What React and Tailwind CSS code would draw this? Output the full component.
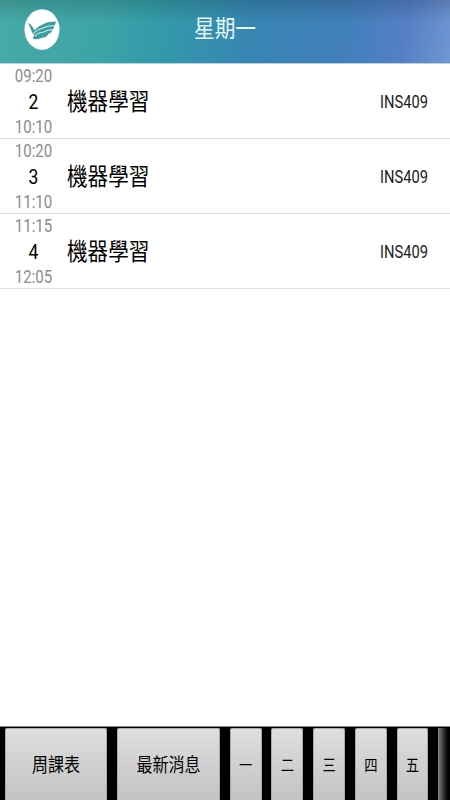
const lessons = [
  { period: 2, start: "09:20", end: "10:10", name: "機器學習", room: "INS409" },
  { period: 3, start: "10:20", end: "11:10", name: "機器學習", room: "INS409" },
  { period: 4, start: "11:15", end: "12:05", name: "機器學習", room: "INS409" },
];

const days = ["一", "二", "三", "四", "五"];

function Logo() {
  return (
    <svg className="h-[41px] w-[36px]" viewBox="0 0 36 41" fill="none">
      <ellipse cx="18" cy="20.5" rx="17.5" ry="20.2" fill="#fff" />
      <path
        d="M3.8 14.3C7 14.6 8.6 18.2 10.6 21.2C13 18 16.5 16.8 19.5 15C23 12.8 27 12.8 31.8 12.6C31.8 15 31 16.2 30 16.8C30.5 18.5 29.5 20 28.2 20.8C28 23.3 26.5 24.5 24.6 24.6C23.5 28 20.3 28.8 17.3 28.9C14.5 30.3 10.5 30.8 8.8 29.2C8.6 28 9.8 27.4 10.6 26.4C6.6 23 7 18 3.8 14.3Z"
        fill="#3b9da0"
      />
      <path
        d="M10 24.8C12.5 19.8 17 20.4 21 18.2C24 16.7 27 17.1 30 16.6M11 27.4C14 22.6 18 24.3 22 22C24.5 20.7 26 21.1 28.4 20.8"
        stroke="#fff"
        strokeWidth="0.9"
      />
    </svg>
  );
}

function Header() {
  return (
    <header className="h-16 border-b border-[#b1d5e3] bg-linear-[100deg,#47aaa7_0%,#3da4a7_23%,#339ba9_35%,#3884b3_57%,#417fbb_76%,#557fc5_89%,#7096d2_100%]">
      <div className="grid h-full grid-cols-[1fr_auto_1fr] items-start bg-linear-to-b from-black/15 via-transparent via-35% to-transparent">
        <div className="pt-[9px] pl-6">
          <Logo />
        </div>
        <h1 className="mt-[13px] origin-center scale-y-[1.15] text-[20.7px] leading-8 text-[#e5f8fa]">
          星期一
        </h1>
      </div>
    </header>
  );
}

function LessonRow({ lesson }) {
  return (
    <li className="flex h-[75px] items-center border-b border-[#dedede] pt-[3px] pr-[22px]">
      <div className="flex w-[67px] flex-col items-center text-[15px] leading-[25.5px] text-[#8c8c8c]">
        <span className="scale-y-[1.18]">{lesson.start}</span>
        <span className="scale-y-[1.18] text-[17.5px] text-black">{lesson.period}</span>
        <span className="scale-y-[1.18]">{lesson.end}</span>
      </div>
      <span className="mb-[2px] flex-1 scale-y-[1.18] text-[20.6px] leading-8 text-black">{lesson.name}</span>
      <span className="scale-y-[1.2] text-[14.7px] text-[#222]">{lesson.room}</span>
    </li>
  );
}

function BarButton({ className, children }) {
  return (
    <button
      className={`flex h-full shrink-0 items-center justify-center rounded-t-[2px] border-x border-t border-[#aaa] bg-linear-to-b from-[#dedede] to-[#c3c3c3] pt-[2px] text-black ${className}`}
    >
      <span className="scale-y-[1.18] whitespace-nowrap">{children}</span>
    </button>
  );
}

export default function App() {
  return (
    <div className="flex h-[800px] w-[450px] flex-col overflow-hidden bg-white font-['Roboto','Noto_Sans_CJK_TC',sans-serif]">
      <Header />
      <ul className="flex-1">
        {lessons.map((lesson) => (
          <LessonRow key={lesson.period} lesson={lesson} />
        ))}
      </ul>
      <nav className="flex h-[74px] gap-[9.8px] overflow-hidden border-t border-[#858585] bg-black pt-px pl-[4.7px]">
        <BarButton className="w-[102.5px] text-[16px]">周課表</BarButton>
        <BarButton className="w-[103px] text-[16px]">最新消息</BarButton>
        {days.map((day) => (
          <BarButton key={day} className="w-[31.9px] text-[13.3px]">
            {day}
          </BarButton>
        ))}
        <div className="h-full w-3 shrink-0 bg-linear-to-r from-[#858585] to-black" />
      </nav>
    </div>
  );
}
